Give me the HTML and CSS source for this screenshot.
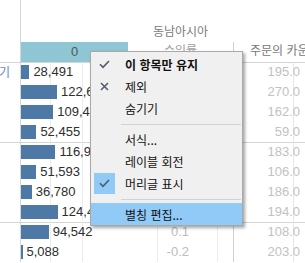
FILE: index.html
```html
<!DOCTYPE html>
<html lang="ko">
<head>
    <meta charset="UTF-8">
    <meta name="viewport" content="width=device-width, initial-scale=1.0">
    <title>수익률 뷰</title>
    <link rel="stylesheet" href="styles.css">
</head>
<body>
    <div class="viz">
        <!-- 상단 헤더 -->
        <div class="band">
            <div class="cell"></div>
            <div class="cell bar-col"></div>
            <div class="cell region">동남아시아</div>
            <div class="cell"></div>
        </div>
        <div class="head">
            <div class="cell"></div>
            <div class="cell bar-col selected">0</div>
            <div class="cell measure faded">수익률</div>
            <div class="cell measure count-col">주문의 카운트</div>
        </div>

        <!-- 데이터 행 -->
        <div class="group">
            <div class="row">
                <div class="cell label"><span>복사기</span></div>
                <div class="cell bar-col"><span class="bar" style="width:8.4px"></span><span class="val">28,491</span></div>
                <div class="cell ratio">0.2</div>
                <div class="cell count-col">195.0</div>
            </div>
            <div class="row">
                <div class="cell label"></div>
                <div class="cell bar-col"><span class="bar" style="width:36px"></span><span class="val">122,645</span></div>
                <div class="cell ratio">0.1</div>
                <div class="cell count-col">270.0</div>
            </div>
            <div class="row">
                <div class="cell label"></div>
                <div class="cell bar-col"><span class="bar" style="width:32.2px"></span><span class="val">109,412</span></div>
                <div class="cell ratio">0.1</div>
                <div class="cell count-col">162.0</div>
            </div>
            <div class="row">
                <div class="cell label"></div>
                <div class="cell bar-col"><span class="bar" style="width:15.4px"></span><span class="val">52,455</span></div>
                <div class="cell ratio">0.0</div>
                <div class="cell count-col">59.0</div>
            </div>
        </div>
        <div class="group">
            <div class="row">
                <div class="cell label"></div>
                <div class="cell bar-col"><span class="bar" style="width:34.4px"></span><span class="val">116,938</span></div>
                <div class="cell ratio">0.2</div>
                <div class="cell count-col">183.0</div>
            </div>
            <div class="row">
                <div class="cell label"></div>
                <div class="cell bar-col"><span class="bar" style="width:15.2px"></span><span class="val">51,593</span></div>
                <div class="cell ratio">-0.1</div>
                <div class="cell count-col">106.0</div>
            </div>
            <div class="row">
                <div class="cell label"></div>
                <div class="cell bar-col"><span class="bar" style="width:10.8px"></span><span class="val">36,780</span></div>
                <div class="cell ratio">0.0</div>
                <div class="cell count-col">186.0</div>
            </div>
            <div class="row">
                <div class="cell label"></div>
                <div class="cell bar-col"><span class="bar" style="width:36.6px"></span><span class="val">124,436</span></div>
                <div class="cell ratio">0.1</div>
                <div class="cell count-col">194.0</div>
            </div>
        </div>
        <div class="group">
            <div class="row">
                <div class="cell label"></div>
                <div class="cell bar-col"><span class="bar" style="width:27.8px"></span><span class="val">94,542</span></div>
                <div class="cell ratio">0.1</div>
                <div class="cell count-col">108.0</div>
            </div>
            <div class="row">
                <div class="cell label"></div>
                <div class="cell bar-col"><span class="bar" style="width:1.5px"></span><span class="val">5,088</span></div>
                <div class="cell ratio">-0.2</div>
                <div class="cell count-col">203.0</div>
            </div>
        </div>
    </div>

    <!-- 컨텍스트 메뉴 -->
    <div class="menu">
        <div class="item strong">
            <span class="icon">
                <svg width="11" height="9" viewBox="0 0 11 9"><path d="M1 4.2 L4 7.4 L10 1" fill="none" stroke="#4f5b69" stroke-width="1.6"/></svg>
            </span>
            이 항목만 유지
        </div>
        <div class="item">
            <span class="icon">
                <svg width="9" height="9" viewBox="0 0 9 9"><path d="M1 1 L8 8 M8 1 L1 8" fill="none" stroke="#4f5b69" stroke-width="1.5"/></svg>
            </span>
            제외
        </div>
        <div class="item"><span class="icon"></span>숨기기</div>
        <div class="sep"></div>
        <div class="item"><span class="icon"></span>서식...</div>
        <div class="item"><span class="icon"></span>레이블 회전</div>
        <div class="item checked">
            <span class="icon">
                <svg width="11" height="9" viewBox="0 0 11 9"><path d="M1 4.2 L4 7.4 L10 1" fill="none" stroke="#4f5b69" stroke-width="1.6"/></svg>
            </span>
            머리글 표시
        </div>
        <div class="sep"></div>
        <div class="item active"><span class="icon"></span>별칭 편집...</div>
    </div>
</body>
</html>
```

FILE: styles.css
```css
/* 기본 */
body {
    margin: 0;
    background-color: #fff;
    font-family: "Liberation Sans", Arial, sans-serif;
    font-size: 13px;
    color: #333;
    overflow: hidden;
}
.viz {
    width: 305px;
}

/* 공통 열 구성 */
.band, .head, .row {
    display: grid;
    grid-template-columns: 20px 108px 105px 72px;
}
.cell {
    box-sizing: border-box;
    min-width: 0;
    white-space: nowrap;
    overflow: hidden;
}
.bar-col {
    border-left: 1px solid #d6d6d6;
}
.count-col {
    border-left: 1px solid #d0d0d0;
}

/* 헤더 */
.band {
    height: 42px;
}
.band .cell:last-child {
    border-left: 0;
}
.region {
    padding-top: 21px;
    line-height: 20px;
    text-align: center;
    font-family: "Noto Sans CJK KR", sans-serif;
    font-size: 12px;
    color: #7a7a7a;
}
.head {
    height: 20px;
}
.selected {
    background-color: #8fc6d4;
    text-align: center;
    line-height: 20px;
    color: #555;
}
.measure {
    line-height: 16px;
    font-family: "Noto Sans CJK KR", sans-serif;
    font-size: 12px;
    color: #777;
}
.faded {
    text-align: center;
    color: #a0a0a0;
}
.head .count-col {
    padding-left: 16px;
}

/* 데이터 행 */
.group {
    box-shadow: inset 0 1px 0 #d4d4d4;
}
.row {
    height: 20px;
    line-height: 20px;
}
.label {
    display: flex;
    justify-content: flex-end;
    padding-right: 10px;
    font-family: "Noto Sans CJK KR", sans-serif;
    font-size: 12px;
    color: #6c7fd1;
}
.label span {
    flex-shrink: 0;
}
.row .bar-col {
    display: flex;
    align-items: flex-start;
    background:
        linear-gradient(#ebebeb, #ebebeb) 29px 0 / 1px 100% no-repeat,
        linear-gradient(#ebebeb, #ebebeb) 61px 0 / 1px 100% no-repeat;
}
.bar {
    flex-shrink: 0;
    height: 14px;
    margin-top: 3px;
    background-color: #4e79a7;
}
.val {
    margin-left: 4px;
    color: #2e2e2e;
}
.ratio {
    text-align: right;
    padding-right: 44px;
    color: #bdbdbd;
    background:
        linear-gradient(#ececec, #ececec) 29px 0 / 1px 100% no-repeat,
        linear-gradient(#ececec, #ececec) 89px 0 / 1px 100% no-repeat;
}
.row .count-col {
    text-align: right;
    padding-right: 5px;
    color: #c2c2c2;
    background: linear-gradient(#e6e6e6, #e6e6e6) 59px 0 / 1px 100% no-repeat;
}

/* 컨텍스트 메뉴 */
.menu {
    position: absolute;
    left: 90px;
    top: 51px;
    width: 151px;
    padding: 1px 0 0;
    border: 1px solid #a8a8a8;
    background-color: #f0f0f0;
    box-shadow: 2px 2px 3px rgba(0,0,0,0.35);
    font-family: "Noto Sans CJK KR", sans-serif;
    font-size: 12px;
    color: #111;
}
.item {
    display: flex;
    align-items: center;
    height: 22px;
    padding-left: 3px;
}
.item.strong {
    font-weight: bold;
}
.item.active {
    background-color: #91c9f7;
}
.icon {
    display: flex;
    align-items: center;
    justify-content: center;
    width: 21px;
    height: 21px;
    margin-right: 10px;
}
.checked .icon {
    background-color: #91c9f7;
}
.sep {
    height: 1px;
    margin: 5px 1px 3px 30px;
    background-color: #d2d2d2;
}
```
